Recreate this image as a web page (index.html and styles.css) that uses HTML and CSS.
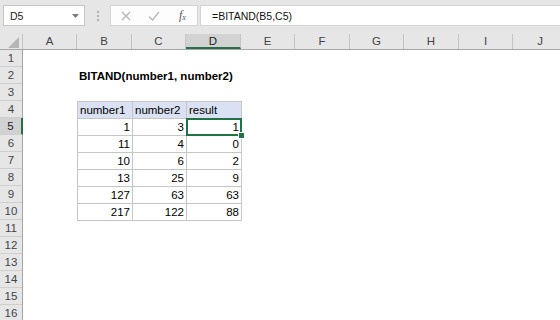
FILE: index.html
```html
<!DOCTYPE html>
<html lang="en">
  <head>
    <meta charset="UTF-8" />
    <meta name="viewport" content="width=device-width, initial-scale=1.0" />
    <title>BITAND</title>
    <link rel="stylesheet" href="styles.css">
  </head>
  <body>

    <div class="toolbar">
      <div class="namebox">
        <span>D5</span>
        <svg class="drop" width="7" height="4" viewBox="0 0 7 4"><polygon points="0,0 7,0 3.5,4" fill="#7a7a7a" /></svg>
      </div>
      <div class="grip"><i></i><i></i><i></i></div>
      <div class="fxbox">
        <svg width="10" height="10" viewBox="0 0 10 10"><path d="M1 1 L9 9 M9 1 L1 9" stroke="#b4b4b4" stroke-width="1.2" fill="none" /></svg>
        <svg width="12" height="10" viewBox="0 0 12 10"><path d="M1 5.5 L4.5 9 L11 1" stroke="#b4b4b4" stroke-width="1.2" fill="none" /></svg>
        <span class="fx"><i>f</i><sub>x</sub></span>
      </div>
      <div class="formula">=BITAND(B5,C5)</div>
    </div>

    <div class="colheads">
      <div class="corner">
        <svg width="11" height="11" viewBox="0 0 11 11"><polygon points="11,0 11,11 0,11" fill="#b5b5b5" /></svg>
      </div>
      <div class="ch narrow">A</div>
      <div class="ch">B</div>
      <div class="ch narrow">C</div>
      <div class="ch active">D</div>
      <div class="ch narrow">E</div>
      <div class="ch">F</div>
      <div class="ch narrow">G</div>
      <div class="ch">H</div>
      <div class="ch narrow">I</div>
      <div class="ch">J</div>
    </div>

    <div class="sheet">
      <div class="rowheads">
        <div class="rh">1</div>
        <div class="rh">2</div>
        <div class="rh">3</div>
        <div class="rh">4</div>
        <div class="rh active">5</div>
        <div class="rh">6</div>
        <div class="rh">7</div>
        <div class="rh">8</div>
        <div class="rh">9</div>
        <div class="rh">10</div>
        <div class="rh">11</div>
        <div class="rh">12</div>
        <div class="rh">13</div>
        <div class="rh">14</div>
        <div class="rh">15</div>
        <div class="rh">16</div>
      </div>

      <div class="cells">
        <div class="title">BITAND(number1, number2)</div>
        <table class="data">
          <tr class="head">
            <td class="cb">number1</td>
            <td class="cc">number2</td>
            <td class="cd">result</td>
          </tr>
          <tr><td>1</td><td>3</td><td class="selected">1</td></tr>
          <tr><td>11</td><td>4</td><td>0</td></tr>
          <tr><td>10</td><td>6</td><td>2</td></tr>
          <tr><td>13</td><td>25</td><td>9</td></tr>
          <tr><td>127</td><td>63</td><td>63</td></tr>
          <tr><td>217</td><td>122</td><td>88</td></tr>
        </table>
      </div>
    </div>

  </body>
</html>
```

FILE: styles.css
```css
body {
  margin: 0;
  width: 560px;
  height: 320px;
  overflow: hidden;
  background: #fff;
  font-family: "Liberation Sans", Arial, sans-serif;
  font-size: 11.5px;
  color: #000;
}

/* formula bar */
.toolbar {
  display: flex;
  align-items: flex-start;
  height: 34px;
  padding-top: 5px;
  box-sizing: border-box;
  background: #e6e6e6;
}
.namebox {
  display: flex;
  align-items: center;
  justify-content: space-between;
  margin-left: 3px;
  width: 82px;
  height: 21px;
  padding: 0 5px 0 6px;
  box-sizing: border-box;
  background: #fff;
  border: 1px solid #c6c6c6;
  font-size: 10.5px;
  color: #222;
}
.grip {
  display: flex;
  flex-direction: column;
  gap: 2px;
  width: 2px;
  margin: 6px 11px 0 12px;
}
.grip i {
  display: block;
  width: 2px;
  height: 2px;
  background: #b0b0b0;
}
.fxbox {
  display: flex;
  align-items: center;
  gap: 17px;
  width: 88px;
  height: 21px;
  padding-left: 10px;
  box-sizing: border-box;
  background: #fdfdfd;
  border: 1px solid #d4d4d4;
}
.fx {
  font-family: "Liberation Serif", "Times New Roman", serif;
  font-size: 12px;
  color: #555;
  margin-left: 2px;
}
.fx sub {
  font-size: 8px;
  font-style: italic;
  vertical-align: -1px;
}
.formula {
  flex-grow: 1;
  margin-left: 2px;
  height: 21px;
  line-height: 20px;
  padding-left: 11px;
  box-sizing: border-box;
  background: #fff;
  border: 1px solid #d4d4d4;
  border-right: none;
  font-size: 10.5px;
  color: #111;
}

/* column headers */
.colheads {
  display: flex;
  height: 16px;
  background: #e6e6e6;
  border-bottom: 1px solid #a6a6a6;
  box-sizing: border-box;
}
.corner {
  display: flex;
  justify-content: flex-end;
  align-items: flex-end;
  flex-shrink: 0;
  width: 23px;
  padding: 0 3px 1px 0;
  box-sizing: border-box;
  border-right: 1px solid #c4c4c4;
}
.ch {
  flex-shrink: 0;
  width: 55px;
  line-height: 15px;
  text-align: center;
  color: #444;
  border-right: 1px solid #c4c4c4;
  box-sizing: border-box;
}
.ch.narrow {
  width: 54px;
}
.ch.active {
  background: #d2d2d2;
  border-bottom: 2px solid #217346;
  color: #222;
}

/* sheet body */
.sheet {
  display: flex;
}
.rowheads {
  width: 23px;
  flex-shrink: 0;
  background: #e6e6e6;
  border-right: 1px solid #a6a6a6;
  box-sizing: border-box;
}
.rh {
  height: 17px;
  line-height: 16px;
  text-align: center;
  color: #444;
  border-bottom: 1px solid #cfcfcf;
  box-sizing: border-box;
}
.rh.active {
  background: #d2d2d2;
  color: #222;
  margin-right: -1px;
  border-right: 2px solid #217346;
}
.cells {
  flex-grow: 1;
  padding-left: 54px;
}
.title {
  margin-top: 17px;
  height: 17px;
  line-height: 18px;
  padding-left: 2px;
  font-weight: bold;
}
.data {
  margin-top: 17px;
  border-collapse: collapse;
}
.data td {
  height: 16px;
  padding: 0 2px 0 2px;
  border: 1px solid #c6c6c6;
  text-align: right;
  line-height: 16px;
  box-sizing: border-box;
}
.data .cb { width: 55px; }
.data .cc { width: 54px; }
.data .cd { width: 55px; }
.data .head td {
  background: #d9e1f2;
  text-align: left;
}
.data td.selected {
  position: relative;
}
.data td.selected::after {
  content: "";
  position: absolute;
  left: -1px;
  top: -1px;
  right: -1px;
  bottom: -1px;
  border: 2px solid #217346;
}
.data td.selected::before {
  content: "";
  position: absolute;
  right: -4px;
  bottom: -4px;
  width: 5px;
  height: 5px;
  background: #217346;
  border: 1px solid #fff;
  z-index: 1;
}
```
